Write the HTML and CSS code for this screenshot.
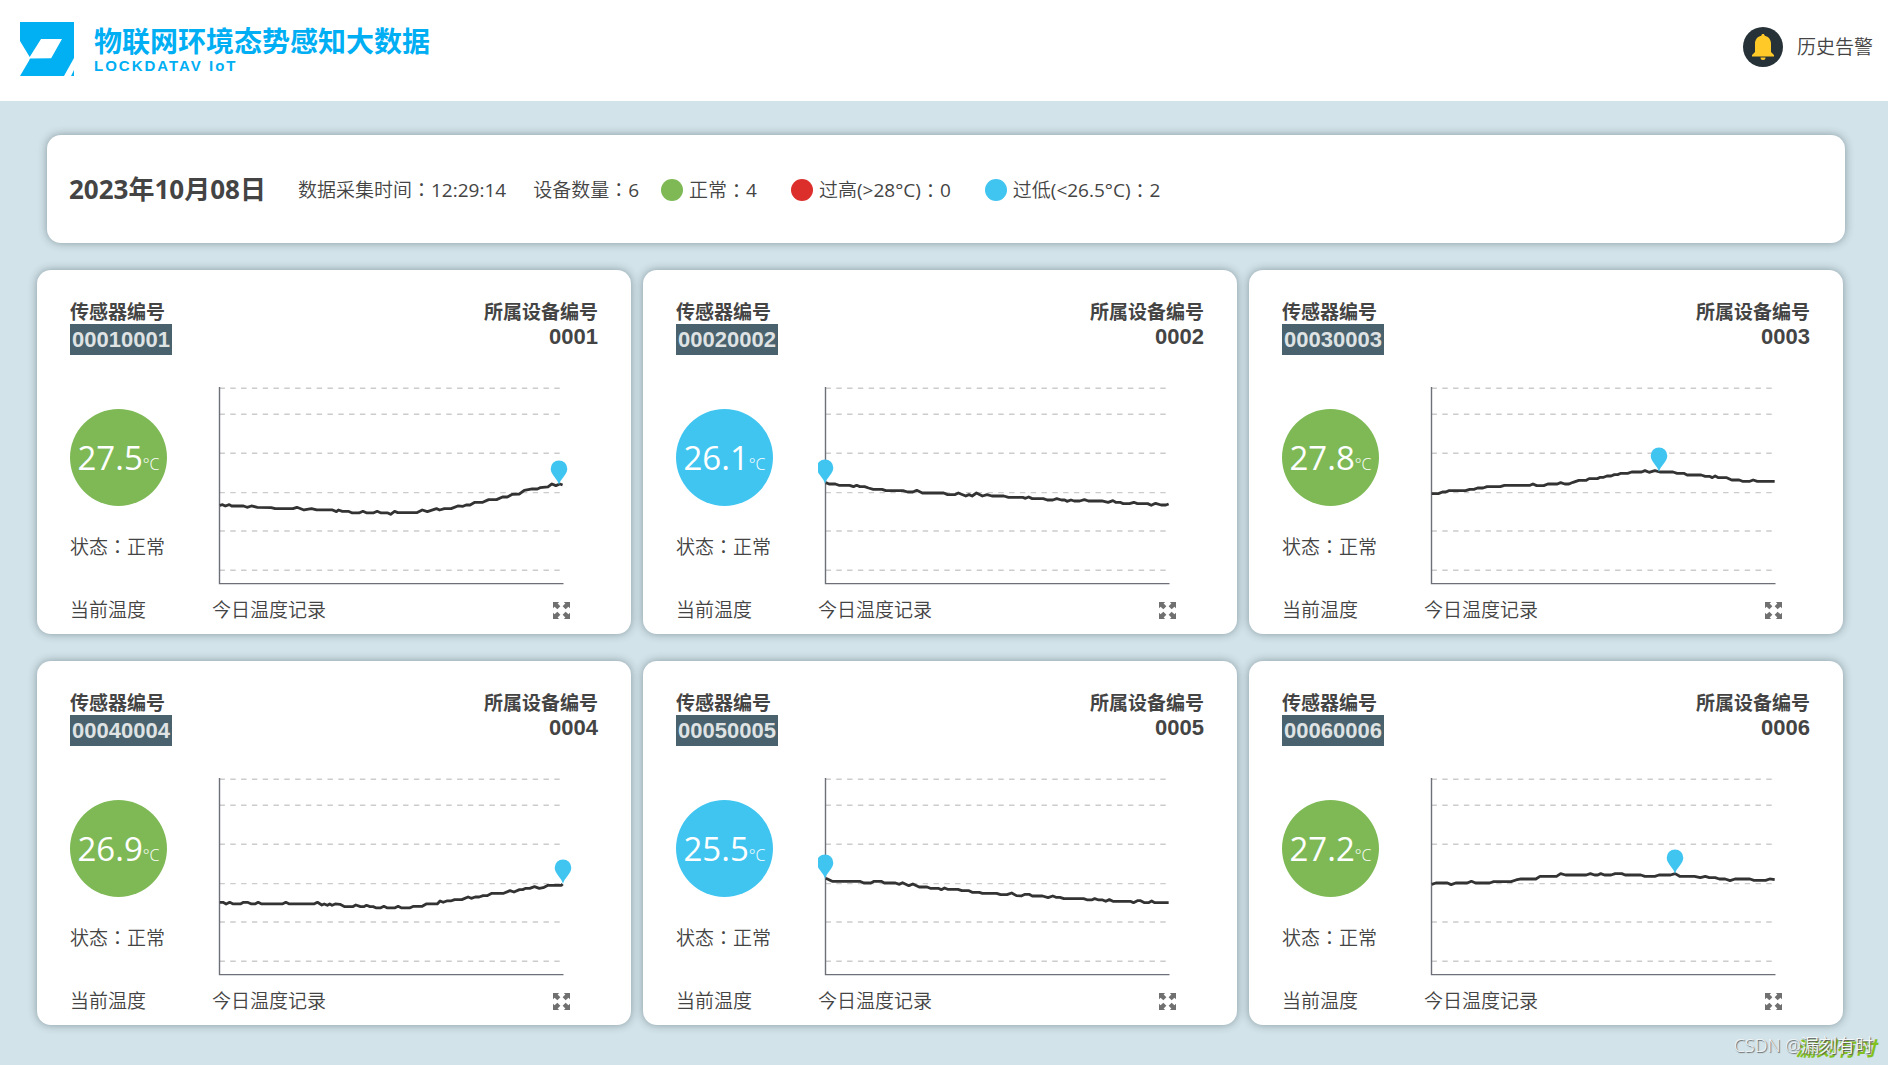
FILE: index.html
```html
<!DOCTYPE html>
<html lang="zh-CN">
<head>
<meta charset="utf-8">
<meta name="viewport" content="width=device-width, initial-scale=1">
<title>物联网环境态势感知大数据</title>
<link rel="stylesheet" href="styles.css">
</head>
<body>
<svg class="defs" width="0" height="0" aria-hidden="true">
  <symbol id="expand" viewBox="0 0 18 18">
    <path id="arrow" d="M0 0H6.500L4.900 1.700 7.800 4.600 4.600 7.800 1.700 4.900 0 6.500Z"/>
    <use href="#arrow" transform="matrix(-1 0 0 1 18 0)"/>
    <use href="#arrow" transform="matrix(1 0 0 -1 0 18)"/>
    <use href="#arrow" transform="matrix(-1 0 0 -1 18 18)"/>
  </symbol>
  <symbol id="axes" viewBox="0 0 386 210">
    <path class="grid-line" d="M7.500 8.300H350M7.500 34.300H350M7.500 73.300H350M7.500 112.600H350M7.500 151H350M7.500 190.300H350"/>
    <path class="axis" d="M7.500 7V203.600H351.500"/>
  </symbol>
  <symbol id="pin" viewBox="-9 -25 18 26" overflow="visible">
    <path d="M0 0C-1-6-8.300-10-8.300-16.300A8.300 8.300 0 1 1 8.300-16.300C8.300-10 1-6 0 0Z"/>
  </symbol>
</svg>

<header class="topbar">
  <div class="brand">
    <svg class="logo" viewBox="0 0 54 54" aria-hidden="true">
      <path fill-rule="evenodd" d="M0 0H54V36L44 54H0L10 37 31 36.500 42 17H21L9.700 35 0 19ZM54 48V54H51Z"/>
      <path d="M10 36.500H31V40H9Z"/>
    </svg>
    <div class="brand-text">
      <h1 class="brand-name">物联网环境态势感知大数据</h1>
      <p class="brand-sub">LOCKDATAV IoT</p>
    </div>
  </div>
  <a class="alarm" href="#">
    <svg class="alarm-icon" viewBox="0 0 40 40" aria-hidden="true">
      <circle cx="20" cy="20" r="20" fill="#263238"/>
      <path fill="#ffca28" d="M20 7c1 0 1.600.700 1.700 1.700 4 .9 6.300 4 6.300 8V25l3 3v1.500H9V28l3-3v-8.300c0-4 2.300-7.100 6.300-8C18.400 7.700 19 7 20 7ZM17.500 30.500h5a2.500 2.500 0 0 1-5 0Z"/>
    </svg>
    <span>历史告警</span>
  </a>
</header>

<main>
  <section class="summary">
    <h2 class="date">2023年10月08日</h2>
    <p class="collected">数据采集时间<span class="colon">：</span><span class="num">12:29:14</span></p>
    <p class="devices">设备数量<span class="colon">：</span><span class="num">6</span></p>
    <ul class="legend">
      <li><i class="dot dot-ok"></i>正常<span class="colon">：</span><span class="num">4</span></li>
      <li><i class="dot dot-high"></i>过高<span class="num">(&gt;28°C)</span><span class="colon">：</span><span class="num">0</span></li>
      <li><i class="dot dot-low"></i>过低<span class="num">(&lt;26.5°C)</span><span class="colon">：</span><span class="num">2</span></li>
    </ul>
  </section>

  <section class="cards">
    <article class="card">
      <div class="card-head">
        <div><h3>传感器编号</h3><span class="sensor">00010001</span></div>
        <div class="owner"><h3>所属设备编号</h3><span class="device">0001</span></div>
      </div>
      <div class="card-body">
        <div class="now">
          <div class="temp temp-ok"><b>27.5</b><small>°C</small></div>
          <p>状态<span class="colon">：</span>正常</p>
        </div>
        <svg class="chart" viewBox="0 0 386 210" role="img" aria-label="今日温度记录">
          <use href="#axes"/>
          <g transform="translate(-182 -120) scale(.3954 .3333)"><polyline class="line" points="480,736 487,734 494,738 504,734 510,738 540,738 549,742 560,738 575,742 610,743 620,746 665,746 675,742 693,750 712,746 725,750 765,750 775,755 780,750 790,754 805,754 815,759 832,759 842,754 852,759 868,759 878,754 888,759 905,759 912,763 922,754 930,758 978,758 992,750 1005,755 1028,746 1036,750 1048,746 1065,746 1082,738 1095,739 1103,735 1113,735 1125,727 1145,727 1160,719 1180,719 1195,711 1207,711 1220,703 1238,702 1250,691 1270,687 1283,687 1290,683 1310,681 1320,672 1330,677 1340,672 1347,675"/></g>
          <use class="pin" href="#pin" x="338" y="80" width="18" height="26"/>
        </svg>
      </div>
      <div class="card-foot"><span>当前温度</span><span>今日温度记录</span><button class="expand" type="button" aria-label="放大"><svg><use href="#expand"/></svg></button></div>
    </article>

    <article class="card">
      <div class="card-head">
        <div><h3>传感器编号</h3><span class="sensor">00020002</span></div>
        <div class="owner"><h3>所属设备编号</h3><span class="device">0002</span></div>
      </div>
      <div class="card-body">
        <div class="now">
          <div class="temp temp-low"><b>26.1</b><small>°C</small></div>
          <p>状态<span class="colon">：</span>正常</p>
        </div>
        <svg class="chart" viewBox="0 0 386 210" role="img" aria-label="今日温度记录">
          <use href="#axes"/>
          <g transform="translate(-178 -120) scale(.3954 .3333)"><polyline class="line" points="470,668 478,672 494,672 503,676 530,676 540,680 548,676 556,680 568,680 578,684 590,688 612,688 622,692 665,692 677,696 690,696 700,691 714,699 768,699 778,704 796,704 805,699 824,708 832,704 840,708 851,699 866,708 878,704 890,708 920,708 932,712 968,712 975,715 983,711 992,716 1020,716 1030,720 1044,720 1054,716 1066,720 1074,720 1080,724 1090,720 1098,723 1112,723 1124,719 1134,723 1168,723 1184,727 1196,722 1203,727 1214,727 1222,731 1238,731 1249,727 1258,731 1284,731 1293,736 1304,730 1318,735 1330,735 1337,732"/></g>
          <use class="pin" href="#pin" x="-2" y="79" width="18" height="26"/>
        </svg>
      </div>
      <div class="card-foot"><span>当前温度</span><span>今日温度记录</span><button class="expand" type="button" aria-label="放大"><svg><use href="#expand"/></svg></button></div>
    </article>

    <article class="card">
      <div class="card-head">
        <div><h3>传感器编号</h3><span class="sensor">00030003</span></div>
        <div class="owner"><h3>所属设备编号</h3><span class="device">0003</span></div>
      </div>
      <div class="card-body">
        <div class="now">
          <div class="temp temp-ok"><b>27.8</b><small>°C</small></div>
          <p>状态<span class="colon">：</span>正常</p>
        </div>
        <svg class="chart" viewBox="0 0 386 210" role="img" aria-label="今日温度记录">
          <use href="#axes"/>
          <g transform="translate(-184 -120) scale(.4132 .3333)"><polyline class="line" points="464,701 480,701 490,696 498,696 506,692 546,692 556,688 566,688 575,684 588,684 598,680 630,680 640,676 702,676 709,672 718,677 735,677 745,672 768,672 776,668 786,672 796,672 806,667 820,661 838,661 845,656 865,656 872,652 880,652 888,648 898,648 906,644 914,644 922,640 938,640 948,636 972,636 980,632 990,637 1004,632 1016,636 1048,636 1058,640 1074,640 1082,645 1116,645 1126,649 1136,649 1143,653 1150,648 1158,653 1178,653 1190,660 1208,660 1216,664 1234,664 1242,660 1252,664 1294,664"/></g>
          <use class="pin" href="#pin" x="226" y="67" width="18" height="26"/>
        </svg>
      </div>
      <div class="card-foot"><span>当前温度</span><span>今日温度记录</span><button class="expand" type="button" aria-label="放大"><svg><use href="#expand"/></svg></button></div>
    </article>

    <article class="card">
      <div class="card-head">
        <div><h3>传感器编号</h3><span class="sensor">00040004</span></div>
        <div class="owner"><h3>所属设备编号</h3><span class="device">0004</span></div>
      </div>
      <div class="card-body">
        <div class="now">
          <div class="temp temp-ok"><b>26.9</b><small>°C</small></div>
          <p>状态<span class="colon">：</span>正常</p>
        </div>
        <svg class="chart" viewBox="0 0 386 210" role="img" aria-label="今日温度记录">
          <use href="#axes"/>
          <g transform="translate(-182 -121) scale(.3954 .3333)"><polyline class="line" points="480,757 488,757 496,762 505,757 514,762 532,762 540,757 550,757 560,762 569,762 577,757 586,762 638,762 647,757 656,762 718,762 727,757 738,765 744,762 752,766 758,762 764,766 772,762 784,763 796,770 816,770 824,765 836,770 844,770 851,766 860,770 868,770 876,774 886,774 895,769 904,774 922,774 931,769 940,774 960,774 970,769 992,769 1002,762 1030,762 1037,753 1045,757 1054,753 1064,753 1074,749 1092,749 1108,741 1116,745 1126,741 1136,741 1146,737 1156,737 1168,730 1198,730 1214,722 1224,726 1238,719 1246,719 1254,715 1264,715 1276,710 1288,715 1298,713 1310,706 1344,706 1347,702"/></g>
          <use class="pin" href="#pin" x="342" y="88" width="18" height="26"/>
        </svg>
      </div>
      <div class="card-foot"><span>当前温度</span><span>今日温度记录</span><button class="expand" type="button" aria-label="放大"><svg><use href="#expand"/></svg></button></div>
    </article>

    <article class="card">
      <div class="card-head">
        <div><h3>传感器编号</h3><span class="sensor">00050005</span></div>
        <div class="owner"><h3>所属设备编号</h3><span class="device">0005</span></div>
      </div>
      <div class="card-body">
        <div class="now">
          <div class="temp temp-low"><b>25.5</b><small>°C</small></div>
          <p>状态<span class="colon">：</span>正常</p>
        </div>
        <svg class="chart" viewBox="0 0 386 210" role="img" aria-label="今日温度记录">
          <use href="#axes"/>
          <g transform="translate(-178 -121) scale(.3954 .3333)"><polyline class="line" points="470,685 486,694 556,694 566,699 584,699 592,694 610,694 618,699 646,699 656,703 664,698 680,707 690,702 706,711 726,711 734,715 754,715 762,719 770,714 778,718 804,718 814,722 832,722 840,727 858,727 866,730 902,730 912,734 928,734 940,729 952,737 964,738 974,733 984,733 992,738 1018,738 1032,743 1044,738 1052,742 1062,742 1072,746 1122,746 1132,750 1142,750 1150,746 1160,750 1170,750 1178,754 1187,749 1196,754 1240,754 1248,758 1258,752 1266,752 1276,758 1286,758 1294,753 1302,758 1337,758"/></g>
          <use class="pin" href="#pin" x="-2" y="83" width="18" height="26"/>
        </svg>
      </div>
      <div class="card-foot"><span>当前温度</span><span>今日温度记录</span><button class="expand" type="button" aria-label="放大"><svg><use href="#expand"/></svg></button></div>
    </article>

    <article class="card">
      <div class="card-head">
        <div><h3>传感器编号</h3><span class="sensor">00060006</span></div>
        <div class="owner"><h3>所属设备编号</h3><span class="device">0006</span></div>
      </div>
      <div class="card-body">
        <div class="now">
          <div class="temp temp-ok"><b>27.2</b><small>°C</small></div>
          <p>状态<span class="colon">：</span>正常</p>
        </div>
        <svg class="chart" viewBox="0 0 386 210" role="img" aria-label="今日温度记录">
          <use href="#axes"/>
          <g transform="translate(-184 -121) scale(.4132 .3333)"><polyline class="line" points="464,703 474,699 502,699 511,704 522,699 550,699 560,694 570,699 604,699 614,695 656,695 668,690 680,687 716,687 726,679 766,679 776,671 788,675 838,675 848,671 858,675 866,675 873,671 882,675 898,675 908,671 924,671 932,675 970,675 980,679 1004,679 1014,675 1042,675 1053,671 1064,679 1100,679 1114,683 1126,679 1136,683 1150,683 1160,687 1174,687 1186,692 1198,687 1234,687 1244,691 1272,691 1282,687 1294,689"/></g>
          <use class="pin" href="#pin" x="242" y="78" width="18" height="26"/>
        </svg>
      </div>
      <div class="card-foot"><span>当前温度</span><span>今日温度记录</span><button class="expand" type="button" aria-label="放大"><svg><use href="#expand"/></svg></button></div>
    </article>
  </section>
</main>

<div class="signature">漏刻有时</div>
<div class="credit">CSDN @漏刻有时</div>
</body>
</html>
```
FILE: styles.css
```css
* {
  box-sizing: border-box;
}

body {
  position: relative;
  min-height: 100vh;
  margin: 0;
  background: #d2e3e9;
  color: #444;
  font: 350 19px/24px "Open Sans", "Noto Sans CJK SC", sans-serif;
}

h1, h2, h3, p, ul {
  margin: 0;
  padding: 0;
}

.defs {
  position: absolute;
}

.colon {
  display: inline-block;
  font-family: "Noto Sans CJK TC", sans-serif;
}

.num {
  font-weight: 400;
}

/* Top bar */
.topbar {
  display: flex;
  align-items: center;
  justify-content: space-between;
  height: 101px;
  padding: 0 15px 7px 20px;
  background: #fff;
}

.brand {
  display: flex;
  align-items: center;
  gap: 20px;
  color: #00aef3;
}

.logo {
  width: 54px;
  height: 54px;
  margin-top: 4px;
  fill: #00b0f3;
}

.brand-text {
  padding-top: 4px;
}

.brand-name {
  font: bold 28px/32px "Noto Sans CJK SC", sans-serif;
}

.brand-sub {
  padding-top: 2px;
  font: bold 15px/16px "Liberation Sans", sans-serif;
  letter-spacing: 2px;
}

.alarm {
  display: flex;
  align-items: center;
  gap: 14px;
  color: inherit;
  text-decoration: none;
}

.alarm-icon {
  width: 40px;
  height: 40px;
}

/* Summary */
.summary,
.card {
  border-radius: 14px;
  background: #fff;
  box-shadow: 0 0 8px rgba(40, 60, 70, .45);
}

.summary {
  display: flex;
  align-items: center;
  min-height: 108px;
  margin: 34px 43px 27px 47px;
  padding: 0 22px;
}

.date {
  margin-right: 32px;
  font-size: 26px;
  line-height: 32px;
}

.collected {
  margin-right: 27px;
}

.devices {
  margin-right: 22px;
}

.legend {
  display: flex;
  gap: 34px;
  padding-top: 2px;
  list-style: none;
}

.legend li {
  display: flex;
  align-items: center;
}

.dot {
  width: 22px;
  height: 22px;
  margin-right: 6px;
  border-radius: 50%;
}

.dot-ok, .temp-ok { background: #7eb956; }
.dot-high { background: #dc2f2c; }
.dot-low, .temp-low { background: #40c5f1; }

/* Sensor cards */
.cards {
  display: grid;
  grid-template-columns: repeat(3, 1fr);
  gap: 27px 12px;
  padding: 0 45px 39px 37px;
}

.card {
  padding: 30px 33px 12px;
}

.card-head {
  display: flex;
  justify-content: space-between;
  margin-bottom: 25px;
}

.card-head h3 {
  font-size: 19px;
  line-height: 24px;
}

.sensor,
.device {
  display: block;
  font: bold 22px/25px "Liberation Sans", sans-serif;
}

.sensor {
  width: max-content;
  padding: 3px 2px;
  background: #4a626d;
  color: #dfe3e4;
}

.owner {
  text-align: right;
}

.card-body,
.card-foot {
  display: grid;
  grid-template-columns: 142px 1fr;
}

.now {
  padding-top: 29px;
}

.temp {
  display: flex;
  align-items: baseline;
  justify-content: center;
  width: 97px;
  height: 97px;
  margin-bottom: 28px;
  border-radius: 50%;
  color: #fff;
  line-height: 97px;
}

.temp b {
  font-size: 33px;
  font-weight: 450;
}

.temp small {
  font-size: 16px;
}

.chart {
  display: block;
  width: 100%;
}

.grid-line {
  fill: none;
  stroke: #ccc;
  stroke-width: 1.4;
  stroke-dasharray: 5.4 5.4;
}

.axis {
  fill: none;
  stroke: #6e7079;
  stroke-width: 1.4;
}

.line {
  fill: none;
  stroke: #333;
  stroke-width: 2.8;
  stroke-linejoin: round;
  vector-effect: non-scaling-stroke;
}

.pin {
  fill: #40c5f1;
}

.card-foot {
  grid-template-columns: 142px 1fr auto;
  align-items: center;
  margin-top: 8px;
  padding-right: 28px;
}

.expand {
  width: 17px;
  height: 17px;
  padding: 0;
  border: 0;
  background: none;
  cursor: pointer;
}

.expand svg {
  display: block;
  width: 17px;
  height: 17px;
  fill: #707070;
}

/* Corner marks */
.signature,
.credit {
  position: absolute;
  white-space: nowrap;
}

.signature {
  right: 12px;
  bottom: 4px;
  color: #82c11e;
  font-size: 20px;
  font-style: italic;
  font-weight: 700;
}

.credit {
  right: 15px;
  bottom: 8px;
  color: #f4f7f8;
  font-size: 18px;
  font-weight: 350;
  text-shadow: 1px 1px 1px #555;
}
```
